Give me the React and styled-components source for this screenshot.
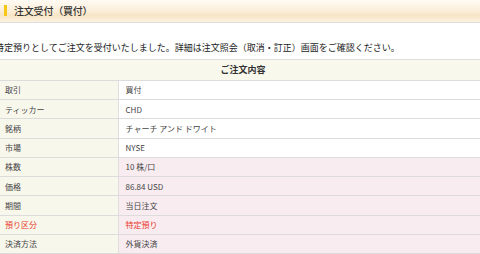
import React from 'react';
import styled, {createGlobalStyle} from 'styled-components';

const GlobalStyle = createGlobalStyle`
    html, body {
        margin: 0;
        padding: 0;
        background: #fff;
        overflow: hidden;
    }
    body {
        font-family: "Noto Sans CJK JP", "Noto Sans", sans-serif;
        color: #333;
    }
`;

const Page = styled.div`
    width: 480px;
    height: 254px;
    display: flex;
    flex-direction: column;
    overflow: hidden;
`;

const TitleBar = styled.div`
    height: 23px;
    display: flex;
    align-items: center;
    gap: 7px;
    padding-left: 4px;
    background: linear-gradient(to bottom, #fffbf4 0%, #fbefdc 45%, #f8e5c6 70%, #fcf1e2 100%);
    border-bottom: 1px solid #dedede;
`;

const TitleMark = styled.span`
    width: 3px;
    height: 11px;
    background: #f7c718;
`;

const Title = styled.h2`
    margin: 0;
    font-size: 10px;
    font-weight: 500;
    color: #333;
    letter-spacing: -0.2px;
`;

const Message = styled.p`
    margin: 19px 0 0 -5px;
    font-size: 9px;
    line-height: 12px;
    white-space: nowrap;
    color: #222;
`;

const OrderTable = styled.table`
    margin-top: 5px;
    width: 486px;
    border-collapse: collapse;
    table-layout: fixed;
    border-top: 1px solid #dedede;
`;

const Column = styled.col`
    width: ${p => p.$width || 'auto'};
`;

const HeadCell = styled.th`
    height: 20px;
    padding: 0;
    background: #f8f8ec;
    font-size: 9px;
    font-weight: 700;
    color: #333;
    text-align: center;
    border-bottom: 1px solid #dcdcdc;
`;

const Label = styled.td`
    height: 18.25px;
    padding: 0 0 0 5px;
    background: #f8f7ec;
    border-bottom: 1px solid #dcdcdc;
    border-right: 1px solid #dedede;
    font-size: 8px;
    color: ${p => (p.$alert ? '#e8392b' : '#444')};
`;

const Value = styled.td`
    height: 18.25px;
    padding: 0 0 0 7px;
    background: ${p => (p.$pink ? '#f9ecf0' : '#fff')};
    border-bottom: 1px solid #dcdcdc;
    font-size: 8px;
    color: ${p => (p.$alert ? '#e8392b' : '#444')};
`;

const rows = [
    {label: '取引', value: '買付'},
    {label: 'ティッカー', value: 'CHD'},
    {label: '銘柄', value: 'チャーチ アンド ドワイト'},
    {label: '市場', value: 'NYSE'},
    {label: '株数', value: '10 株/口', pink: true},
    {label: '価格', value: '86.84 USD', pink: true},
    {label: '期間', value: '当日注文', pink: true},
    {label: '預り区分', value: '特定預り', pink: true, alert: true},
    {label: '決済方法', value: '外貨決済', pink: true},
];

export default function App() {
    return (
        <Page>
            <GlobalStyle/>
            <TitleBar>
                <TitleMark/>
                <Title>注文受付（買付）</Title>
            </TitleBar>
            <Message>
                特定預りとしてご注文を受付いたしました。詳細は注文照会（取消・訂正）画面をご確認ください。
            </Message>
            <OrderTable>
                <colgroup>
                    <Column $width="118px"/>
                    <Column/>
                </colgroup>
                <thead>
                    <tr>
                        <HeadCell colSpan={2}>ご注文内容</HeadCell>
                    </tr>
                </thead>
                <tbody>
                    {rows.map(row => (
                        <tr key={row.label}>
                            <Label $alert={row.alert}>{row.label}</Label>
                            <Value $pink={row.pink} $alert={row.alert}>{row.value}</Value>
                        </tr>
                    ))}
                </tbody>
            </OrderTable>
        </Page>
    );
}
